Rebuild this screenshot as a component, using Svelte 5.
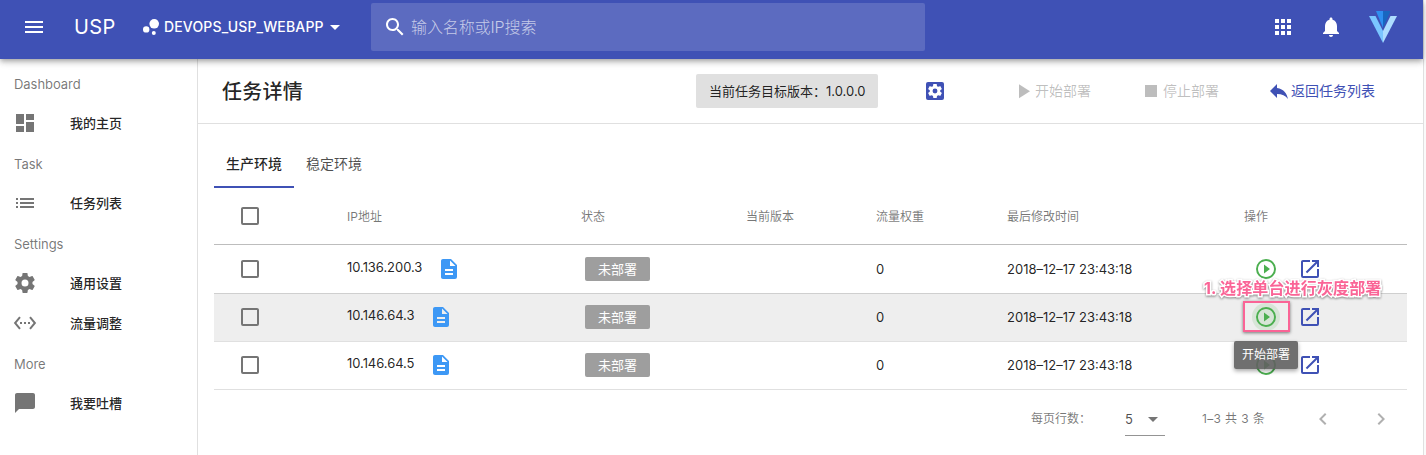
<script>
  const nav = [
    { heading: 'Dashboard' },
    { label: '我的主页', icon: 'M13,3V9H21V3M13,21H21V11H13M3,21H11V15H3M3,13H11V3H3V13Z' },
    { heading: 'Task' },
    { label: '任务列表', icon: 'M3,7H5V9H3V7M3,11H5V13H3V11M3,15H5V17H3V15M7,7H21V9H7V7M7,11H21V13H7V11M7,15H21V17H7V15Z' },
    { heading: 'Settings' },
    { label: '通用设置', icon: 'M12,15.5A3.5,3.5 0 0,1 8.5,12A3.5,3.5 0 0,1 12,8.5A3.5,3.5 0 0,1 15.5,12A3.5,3.5 0 0,1 12,15.5M19.43,12.97C19.47,12.65 19.5,12.33 19.5,12C19.5,11.67 19.47,11.34 19.43,11L21.54,9.37C21.73,9.22 21.78,8.95 21.66,8.73L19.66,5.27C19.54,5.05 19.27,4.96 19.05,5.05L16.56,6.05C16.04,5.66 15.5,5.32 14.87,5.07L14.5,2.42C14.46,2.18 14.25,2 14,2H10C9.75,2 9.54,2.18 9.5,2.42L9.13,5.07C8.5,5.32 7.96,5.66 7.44,6.05L4.95,5.05C4.73,4.96 4.46,5.05 4.34,5.27L2.34,8.73C2.21,8.95 2.27,9.22 2.46,9.37L4.57,11C4.53,11.34 4.5,11.67 4.5,12C4.5,12.33 4.53,12.65 4.57,12.97L2.46,14.63C2.27,14.78 2.21,15.05 2.34,15.27L4.34,18.73C4.46,18.95 4.73,19.03 4.95,18.95L7.44,17.94C7.96,18.34 8.5,18.68 9.13,18.93L9.5,21.58C9.54,21.82 9.75,22 10,22H14C14.25,22 14.46,21.82 14.5,21.58L14.87,18.93C15.5,18.67 16.04,18.34 16.56,17.94L19.05,18.95C19.27,19.03 19.54,18.95 19.66,18.73L21.66,15.27C21.78,15.05 21.73,14.78 21.54,14.63L19.43,12.97Z' },
    { label: '流量调整', icon: 'M7.77 6.76L6.23 5.48.82 12l5.41 6.52 1.54-1.28L3.42 12l4.35-5.24zM7 13h2v-2H7v2zm10-2h-2v2h2v-2zm-6 2h2v-2h-2v2zm6.77-7.52l-1.54 1.28L20.58 12l-4.35 5.24 1.54 1.28L23.18 12l-5.41-6.52z' },
    { heading: 'More' },
    { label: '我要吐槽', icon: 'M20 2H4c-1.1 0-2 .9-2 2v18l4-4h14c1.1 0 2-.9 2-2V4c0-1.1-.9-2-2-2z' },
  ];
  const columns = ['IP地址', '状态', '当前版本', '流量权重', '最后修改时间', '操作'];
  const rows = [
    { ip: '10.136.200.3', status: '未部署', weight: 0, time: '2018–12–17 23:43:18' },
    { ip: '10.146.64.3', status: '未部署', weight: 0, time: '2018–12–17 23:43:18', active: true },
    { ip: '10.146.64.5', status: '未部署', weight: 0, time: '2018–12–17 23:43:18' },
  ];
  const box = 'M19,3H5C3.89,3 3,3.89 3,5V19A2,2 0 0,0 5,21H19A2,2 0 0,0 21,19V5C21,3.89 20.1,3 19,3M19,5V19H5V5H19Z';
  const file = 'M13,9H18.5L13,3.5V9M6,2H14L20,8V20A2,2 0 0,1 18,22H6C4.89,22 4,21.1 4,20V4C4,2.89 4.89,2 6,2M16,18V16H8V18H16M16,14V12H8V14H16Z';
  const play = 'M12,20C7.59,20 4,16.41 4,12C4,7.59 7.59,4 12,4C16.41,4 20,7.59 20,12C20,16.41 16.41,20 12,20M12,2A10,10 0 0,0 2,12A10,10 0 0,0 12,22A10,10 0 0,0 22,12A10,10 0 0,0 12,2M10,16.5L16,12L10,7.5V16.5Z';
  const open = 'M14,3V5H17.59L7.76,14.83L9.17,16.24L19,6.41V10H21V3M19,19H5V5H12V3H5C3.89,3 3,3.9 3,5V19A2,2 0 0,0 5,21H19A2,2 0 0,0 21,19V12H19V19Z';
  const caret = 'M7,10L12,15L17,10H7Z';
</script>

{#snippet icon(d)}
  <svg class="icon" viewBox="0 0 24 24"><path {d} fill-rule="evenodd" /></svg>
{/snippet}

<div class="app">
  <header>
    {@render icon('M3,6H21V8H3V6M3,11H21V13H3V11M3,16H21V18H3V16Z')}
    <span class="brand">USP</span>
    <div class="project">
      <svg class="icon" viewBox="0 0 24 24"><circle cx="7.2" cy="14.4" r="3.2" /><circle cx="14.8" cy="18" r="2" /><circle cx="15.2" cy="8.8" r="4.8" /></svg>
      <span class="pname">DEVOPS_USP_WEBAPP</span>
      {@render icon(caret)}
    </div>
    <div class="search">
      {@render icon('M15.5 14h-.79l-.28-.27C15.41 12.59 16 11.11 16 9.5 16 5.91 13.09 3 9.5 3S3 5.91 3 9.5 5.91 16 9.5 16c1.61 0 3.09-.59 4.23-1.57l.27.28v.79l5 4.99L20.49 19l-4.99-5zm-6 0C7.01 14 5 11.99 5 9.5S7.01 5 9.5 5 14 7.01 14 9.5 11.99 14 9.5 14z')}
      <span>输入名称或IP搜索</span>
    </div>
    <div class="right">
      {@render icon('M4,4H8V8H4M10,4H14V8H10M16,4H20V8H16M4,10H8V14H4M10,10H14V14H10M16,10H20V14H16M4,16H8V20H4M10,16H14V20H10M16,16H20V20H16')}
      {@render icon('M12 22c1.1 0 2-.9 2-2h-4c0 1.1.89 2 2 2zm6-6v-5c0-3.07-1.64-5.64-4.5-6.32V4c0-.83-.67-1.5-1.5-1.5s-1.5.67-1.5 1.5v.68C7.63 5.36 6 7.92 6 11v5l-2 2v1h16v-1l-2-2z')}
      <svg class="logo" viewBox="0 0 28 32">
        <path fill="#2f8ff0" d="M7 0H14V17Z" /><path fill="#1867c0" d="M14 0H21.5L14 17Z" />
        <path fill="#7bc6ff" d="M0 5H6.5L14 20V32Z" /><path fill="#aeddff" d="M28 5H21.5L14 20V32Z" />
      </svg>
    </div>
  </header>

  <div class="body">
    <nav>
      {#each nav as n}
        {#if n.heading}
          <div class="heading">{n.heading}</div>
        {:else}
          <div class="item">{@render icon(n.icon)}<span>{n.label}</span></div>
        {/if}
      {/each}
    </nav>
    <main>
      <div class="toolbar">
        <h1>任务详情</h1>
        <div class="version">当前任务目标版本：<span class="num">1.0.0.0</span></div>
        <div class="gear">
          <svg class="icon" viewBox="0 0 24 24"><rect x="3" y="3" width="18" height="18" rx="2" /><g transform="translate(12 12) scale(.7) translate(-12 -12)"><path class="cog" d={nav[5].icon} /></g></svg>
        </div>
        <div class="btn start off">{@render icon('M8,5.14V19.14L19,12.14L8,5.14Z')}<span>开始部署</span></div>
        <div class="btn stop off">{@render icon('M18,18H6V6H18V18Z')}<span>停止部署</span></div>
        <div class="btn back">{@render icon('M10,9V5L3,12L10,19V14.9C15,14.9 18.5,16.5 21,20C20,15 17,10 10,9Z')}<span>返回任务列表</span></div>
      </div>

      <div class="content">
        <div class="tabs"><div class="tab on">生产环境</div><div class="tab">稳定环境</div></div>
        <div class="row head">
          <div class="check">{@render icon(box)}</div>
          {#each columns as c}<div class="title">{c}</div>{/each}
        </div>
        {#each rows as r}
          <div class="row" class:active={r.active}>
            <div class="check">{@render icon(box)}</div>
            <div class="ip"><span>{r.ip}</span>{@render icon(file)}</div>
            <div><span class="status">{r.status}</span></div>
            <div></div>
            <div class="weight">{r.weight}</div>
            <div class="time">{r.time}</div>
            <div class="ops">
              <div class="play">{@render icon(play)}
                {#if r.active}
                  <div class="tooltip">开始部署</div>
                  <div class="frame"></div>
                  <div class="note"><span>1.</span> 选择单台进行灰度部署</div>
                {/if}
              </div>
              <div class="open">{@render icon(open)}</div>
            </div>
          </div>
        {/each}
        <div class="pager">
          <span>每页行数：</span>
          <div class="select"><span>5</span>{@render icon(caret)}</div>
          <span class="range">1–3 共 3 条</span>
          <div class="arrows">
            {@render icon('M15.41,16.58L10.83,12L15.41,7.41L14,6L8,12L14,18L15.41,16.58Z')}
            {@render icon('M8.59,16.58L13.17,12L8.59,7.41L10,6L16,12L10,18L8.59,16.58Z')}
          </div>
        </div>
      </div>
    </main>
  </div>
</div>

<style>
  :global(body) { background: #fafafa; overflow: hidden; }
  .app { width: 1423px; height: 455px; display: flex; flex-direction: column; background: #fff; border-right: 1px solid #e0e0e0; font: 13px/20px Inter, "Noto Sans CJK SC", sans-serif; color: rgba(0,0,0,.87); white-space: nowrap; }
  .icon { width: 24px; height: 24px; flex: none; display: block; fill: currentColor; }
  header { position: relative; z-index: 2; height: 59px; padding: 0 26px 5px 22px; box-sizing: border-box; display: flex; align-items: center; background: #3f51b5; color: #fff; box-shadow: 0 2px 4px -1px rgba(0,0,0,.2), 0 4px 5px rgba(0,0,0,.14), 0 1px 10px rgba(0,0,0,.12); }
  .brand { width: 65px; margin-left: 28px; font-size: 20px; letter-spacing: .4px; }
  .project { width: 232px; display: flex; align-items: center; }
  .pname { width: 159px; padding-left: 1px; font-size: 14px; font-weight: 450; letter-spacing: .15px; }
  .search { width: 554px; height: 48px; box-sizing: border-box; padding-left: 12px; display: flex; align-items: center; gap: 4px; background: #5c6bc0; border-radius: 2px; font-size: 16px; }
  .search span { color: rgba(255,255,255,.66); font-weight: 300; letter-spacing: -.1px; }
  .right { margin-left: auto; display: flex; align-items: center; gap: 24px; }
  .logo { width: 28px; height: 32px; margin-left: 2px; }
  .body { flex: 1; display: flex; min-height: 0; }
  nav { width: 197px; padding-top: 4px; border-right: 1px solid #e0e0e0; }
  .heading { height: 40px; line-height: 42px; padding-left: 14px; color: rgba(0,0,0,.54); letter-spacing: -.05px; }
  .item { height: 40px; padding-left: 13px; display: flex; align-items: center; gap: 33px; color: #757575; }
  .item span { color: rgba(0,0,0,.87); font-weight: 500; }
  main { flex: 1; min-width: 0; }
  .toolbar { height: 65px; box-sizing: border-box; border-bottom: 1px solid #e0e0e0; padding-left: 24px; display: flex; align-items: center; }
  h1 { width: 474px; margin: 0; padding-top: 2px; font-size: 20px; line-height: 28px; font-weight: 500; letter-spacing: .25px; }
  .version { width: 182px; height: 34px; line-height: 34px; box-sizing: border-box; padding-left: 13px; background: #e0e0e0; border-radius: 2px; }
  .gear { margin-left: 45px; color: #3f51b5; }
  .cog { fill: #fff; }
  .btn { display: flex; align-items: center; font-size: 14px; color: #3f51b5; }
  .start { margin-left: 64px; } .stop { margin-left: 48px; } .back { margin-left: 48px; }
  .off { color: rgba(0,0,0,.26); }
  .content { padding: 16px 16px 0; }
  .tabs { height: 48px; display: flex; }
  .tab { width: 80px; box-sizing: border-box; padding-left: 12px; font-size: 14px; line-height: 47px; color: rgba(0,0,0,.7); }
  .on { border-bottom: 2px solid #3f51b5; color: rgba(0,0,0,.87); font-weight: 500; }
  .row { display: grid; grid-template-columns: 133px 234px 165px 130px 131px 237px 163px; height: 48px; box-sizing: border-box; padding-bottom: 1px; align-items: center; border-bottom: 1px solid #e0e0e0; }
  .head { height: 57px; padding-bottom: 0; font-size: 12px; color: rgba(0,0,0,.54); border-color: #bdbdbd; }
  .title { padding-top: 2px; }
  .head + .row { height: 49px; padding-bottom: 0; border-color: #cfcfcf; }
  .active { background: #eee; }
  .check { padding-left: 24px; color: #757575; }
  .ip { display: flex; align-items: center; gap: 15px; }
  .ip span { position: relative; top: -2px; letter-spacing: -.05px; }
  .ip .icon { margin-left: -.5px; color: #3d98f5; }
  .status { display: block; width: 65px; height: 24px; line-height: 24px; margin-left: 4px; text-align: center; color: #fff; background: #9e9e9e; border-radius: 2px; }
  .ops { display: flex; gap: 20px; padding-left: 10px; }
  .play { position: relative; color: #4caf50; }
  .active .play > .icon { border-radius: 50%; box-shadow: 0 0 0 2px rgba(76,175,80,.14); background: rgba(76,175,80,.14); }
  .open { color: #3f51b5; }
  .tooltip { position: absolute; z-index: 3; left: -20px; top: 36px; width: 64px; height: 28px; line-height: 27px; text-align: center; font-size: 12px; color: #fff; background: rgba(97,97,97,.91); border-radius: 2px; box-shadow: 0 2px 4px rgba(0,0,0,.35); }
  .frame { position: absolute; left: -11px; top: -4px; width: 43px; height: 27px; border: 2px solid #fa6496; box-shadow: 0 1px 3px rgba(0,0,0,.5); }
  .note { position: absolute; z-index: 3; left: -50px; top: -29px; font-size: 16px; line-height: 24px; font-weight: 700; letter-spacing: .15px; color: #fa6496; -webkit-text-stroke: 3px #fff; paint-order: stroke fill; filter: drop-shadow(0 1px 1px rgba(0,0,0,.45)); }
  .pager { display: flex; align-items: center; height: 58px; padding-left: 817px; font-size: 12px; color: rgba(0,0,0,.54); }
  .pager > span:first-child { width: 94px; }
  .select { width: 40px; height: 34px; box-sizing: border-box; border-bottom: 1px solid #949494; display: flex; align-items: center; justify-content: space-between; font-size: 13px; color: rgba(0,0,0,.7); }
  .select .icon { color: #757575; }
  .range { width: 109px; margin-left: 37px; letter-spacing: .35px; }
  .arrows { display: flex; gap: 34px; color: #b0b0b0; }
</style>
